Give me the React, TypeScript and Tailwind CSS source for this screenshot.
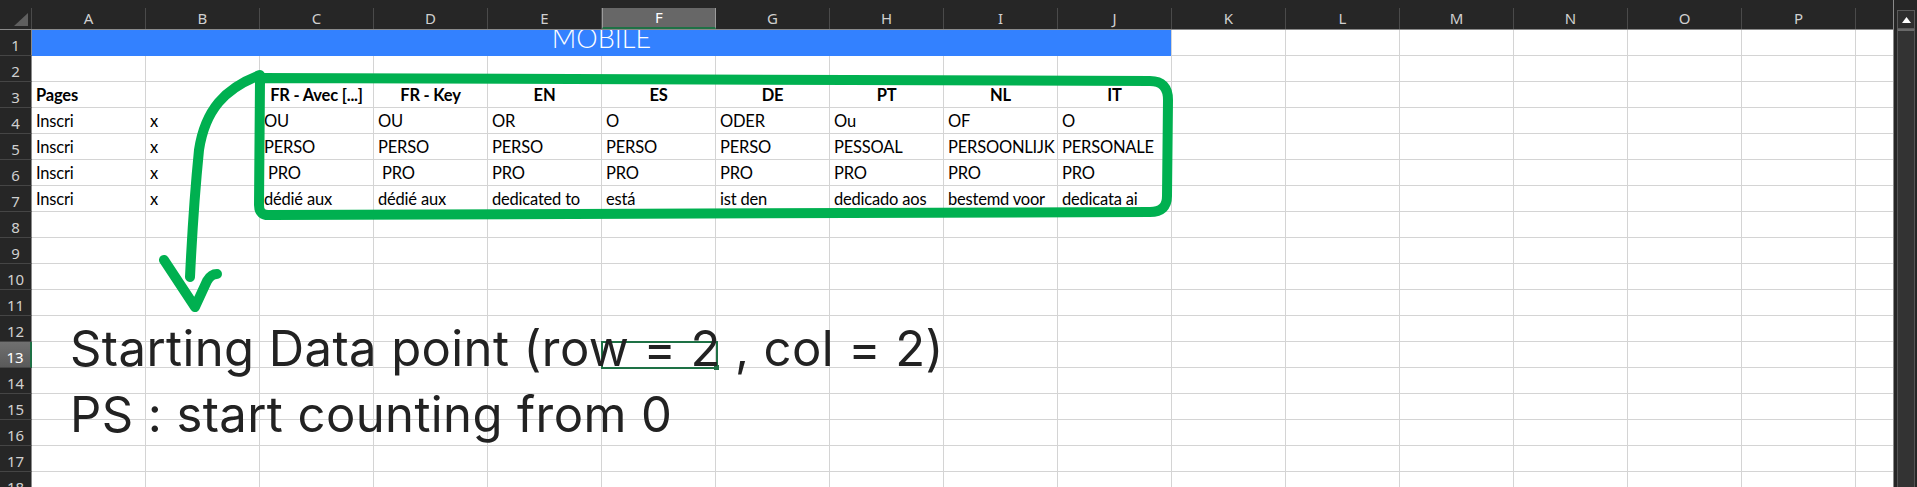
// Excel-like sheet with a hand-drawn annotation over it

const COLS = ['A', 'B', 'C', 'D', 'E', 'F', 'G', 'H', 'I', 'J', 'K', 'L', 'M', 'N', 'O', 'P']

const HEADINGS = ['FR - Avec [...]', 'FR - Key', 'EN', 'ES', 'DE', 'PT', 'NL', 'IT']

const DATA: Record<number, string[]> = {
  4: ['Inscri', 'x', 'OU', 'OU', 'OR', 'O', 'ODER', 'Ou', 'OF', 'O'],
  5: ['Inscri', 'x', 'PERSO', 'PERSO', 'PERSO', 'PERSO', 'PERSO', 'PESSOAL', 'PERSOONLIJK', 'PERSONALE'],
  6: ['Inscri', 'x', ' PRO', ' PRO', 'PRO', 'PRO', 'PRO', 'PRO', 'PRO', 'PRO'],
  7: ['Inscri', 'x', 'dédié aux', 'dédié aux', 'dedicated to', 'está', 'ist den', 'dedicado aos', 'bestemd voor', 'dedicata ai'],
}

const ROWS = Array.from({ length: 18 }, (_, i) => i + 1)

// ── Headers ────────────────────────────────────────────────────────────────
function ColumnHeader() {
  return (
    <div className="flex h-[22px] shrink-0 border-b border-[#8a8a8a] font-['Noto_Sans',sans-serif] text-[15px] leading-[21px]">
      <div className="flex h-[21px] w-[32px] shrink-0 items-end justify-end border-r border-[#4a4a4a] pr-[3px] pb-[3px]">
        <svg width="14" height="13" viewBox="0 0 14 13">
          <polygon points="14,0 14,13 0,13" fill="#5f5f5f" />
        </svg>
      </div>
      {COLS.map((c) =>
        c === 'F' ? (
          <div
            key={c}
            className="h-[21px] w-[114px] shrink-0 border-x border-b-2 border-x-[#9b9b9b] border-b-[#1e7145] bg-[#676767] text-center leading-[19px] text-white"
          >
            {c}
          </div>
        ) : (
          <div key={c} className="h-[21px] w-[114px] shrink-0 border-r border-[#4a4a4a] text-center text-[#d0d0d0]">
            {c}
          </div>
        ),
      )}
      <div className="w-[37px] shrink-0" />
    </div>
  )
}

function RowHead({ n }: { n: number }) {
  const active = n === 13
  return (
    <div
      className={`h-[26px] w-[32px] shrink-0 border-b border-b-[#454545] pt-[5px] text-center font-['Noto_Sans',sans-serif] text-[15px] leading-[20px] ${
        active
          ? 'border-r-2 border-r-[#1e7145] bg-gradient-to-b from-[#707070] to-[#5a5a5a] text-white'
          : 'border-r border-r-[#8a8a8a] text-[#d0d0d0]'
      }`}
    >
      {n}
    </div>
  )
}

// ── Cells ──────────────────────────────────────────────────────────────────
function Cell({ text, bold, center }: { text?: string; bold?: boolean; center?: boolean }) {
  return (
    <div
      className={`flex h-[26px] w-[114px] shrink-0 items-end overflow-hidden whitespace-pre border-b border-r border-[#d4d4d4] bg-white px-[4px] pb-[3px] text-[16.5px] leading-[17px] tracking-[-0.2px] text-black ${
        center ? 'justify-center' : ''
      } ${bold ? 'font-bold' : ''}`}
    >
      {text}
    </div>
  )
}

function SheetRow({ n }: { n: number }) {
  let cells: React.ReactNode
  if (n === 1) {
    cells = (
      <>
        <div className="flex h-[26px] w-[1140px] shrink-0 items-end justify-center overflow-hidden border-r border-[#d4d4d4] bg-[#3381ff] pb-[5px] font-['Lato',sans-serif] text-[27px] font-light leading-[27px] text-white">
          MOBILE
        </div>
        {COLS.slice(10).map((c) => (
          <Cell key={c} />
        ))}
      </>
    )
  } else if (n === 3) {
    cells = COLS.map((c, i) => (
      <Cell
        key={c}
        text={i === 0 ? 'Pages' : i >= 2 && i < 10 ? HEADINGS[i - 2] : undefined}
        bold
        center={i >= 2}
      />
    ))
  } else {
    const row = DATA[n] ?? []
    cells = COLS.map((c, i) => <Cell key={c} text={row[i]} />)
  }

  return (
    <div className="flex shrink-0 font-['Lato',sans-serif]">
      <RowHead n={n} />
      {cells}
      <div className="h-[26px] w-[37px] shrink-0 border-b border-[#d4d4d4] bg-white" />
    </div>
  )
}

// ── Scrollbar ──────────────────────────────────────────────────────────────
function Scrollbar() {
  return (
    <div className="flex w-[23px] shrink-0 flex-col bg-[#262626] pt-[10px] pl-[3px] pr-[2px]">
      <div className="flex h-[19px] items-center justify-center border border-[#5a5a5a] bg-[#2e2e2e]">
        <svg width="9" height="6" viewBox="0 0 9 6">
          <polygon points="4.5,0 9,6 0,6" fill="#ffffff" />
        </svg>
      </div>
      <div className="flex-1 border-x border-t-2 border-[#555555] border-t-[#6a6a6a] bg-[#333333]" />
    </div>
  )
}

// ── Annotation (freehand ink) ──────────────────────────────────────────────
function Ink() {
  return (
    <svg
      className="pointer-events-none absolute left-0 top-0"
      width="1917"
      height="487"
      viewBox="0 0 1917 487"
      fill="none"
      stroke="#00b050"
      strokeWidth="10"
      strokeLinecap="round"
      strokeLinejoin="round"
    >
      <path d="M260 78 L1150 81 Q1168 81 1168 100 L1167 196 Q1167 212 1150 212 L270 215 Q259 216 259 205 L260 80" />
      <path d="M260 75 C225 88 205 110 199 150 C195 190 192 235 190 277" />
      <path d="M164 260 L195 307 L207 281 Q211 274 217 274" />
    </svg>
  )
}

// ── App ────────────────────────────────────────────────────────────────────
export default function App() {
  return (
    <div className="relative h-[487px] w-[1917px] overflow-hidden bg-[#262626]">
      <div className="flex h-full">
        <div className="flex w-[1894px] shrink-0 flex-col border-r border-[#8a8a8a] pt-[8px]">
          <ColumnHeader />
          {ROWS.map((n) => (
            <SheetRow key={n} n={n} />
          ))}
        </div>
        <Scrollbar />
      </div>

      {/* active cell F13 */}
      <div className="absolute left-[601px] top-[341px] h-[28px] w-[117px] border-2 border-[#1e7145]">
        <div className="absolute -bottom-[3px] -right-[3px] h-[5px] w-[5px] bg-[#1e7145]" />
      </div>

      {/* text box */}
      <div className="absolute left-[70px] top-[316px] font-['Inter',sans-serif] text-[49px] leading-[66px] tracking-[0.4px] text-[#222222]">
        <p>Starting Data point (row = 2 , col = 2)</p>
        <p>PS : start counting from 0</p>
      </div>

      <Ink />
    </div>
  )
}
